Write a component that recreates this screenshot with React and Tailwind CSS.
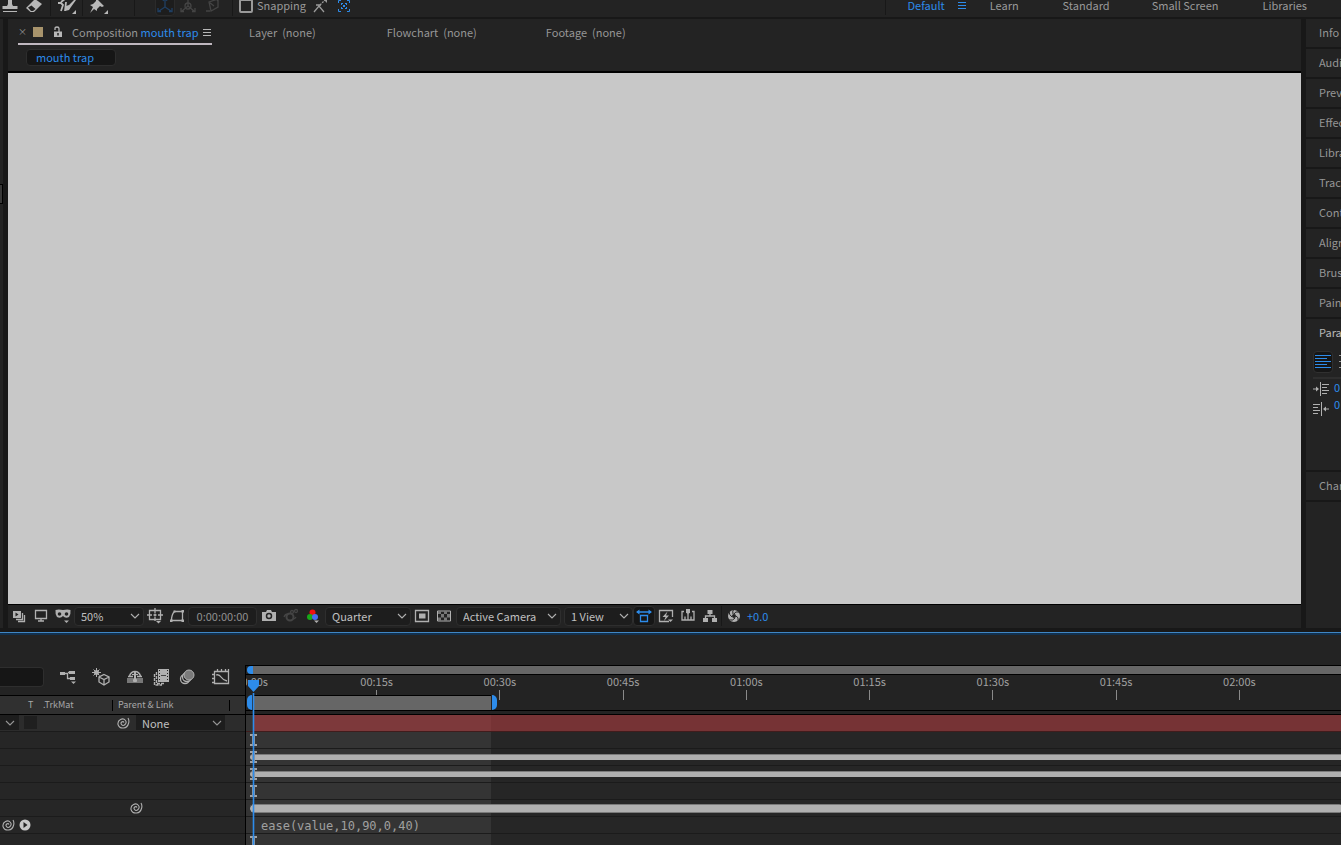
import React from "react";

const Svg = ({ w = 16, h = 16, className = "", children }) => (
  <svg
    width={w}
    height={h}
    viewBox={`0 0 ${w} ${h}`}
    fill="none"
    stroke="currentColor"
    strokeWidth="1.3"
    className={`shrink-0 ${className}`}
    aria-hidden="true"
  >
    {children}
  </svg>
);

const IconStamp = () => (
  <Svg w={16} h={18}>
    <path d="M6 2h4v5l1 2h4.500v3H.5V9H5l1-2z" fill="currentColor" stroke="none" />
    <path d="M1 14.500h14" strokeWidth="1" />
  </Svg>
);

const IconEraser = () => (
  <Svg w={18} h={18}>
    <path d="M10 2l7 5-8 8H5.500l-4.500-4z" fill="currentColor" stroke="none" />
    <path d="M3 10.500l3.500-2 4 3.500-2.500 2H6z" fill="#232323" stroke="none" />
  </Svg>
);

const IconRoto = () => (
  <Svg w={20} h={18}>
    <path d="M1 6h3l2 2-2 6M4 5l4-3M9 5l-1 9" strokeWidth="1.800" />
    <path d="M18 2l-6 6-3 1-1 5 4-1 2-3 5-7z" fill="currentColor" stroke="none" />
    <path d="M19 13v4h-4z" fill="currentColor" stroke="none" />
  </Svg>
);

const IconPin = () => (
  <Svg w={20} h={18}>
    <path
      d="M7 1l8 8-2 1-2-1-3 3 0 2-3-2-4 4 3-6-3-2 3-1 3-3z"
      fill="currentColor"
      stroke="none"
    />
    <path d="M19 13v4h-4z" fill="currentColor" stroke="none" />
  </Svg>
);

const IconAxis = () => (
  <Svg w={16} h={18}>
    <path d="M8 2v8L2 14M8 10l6 4M1 11v3.500h3M15 11v3.500h-3M6 4l2-3 2 3" />
  </Svg>
);

const IconWorldAxis = () => (
  <Svg w={16} h={18}>
    <path d="M8 2v7L2 14M8 9l6 5M1 11v3.500h3M15 11v3.500h-3" />
    <circle cx="8" cy="9" r="3" />
  </Svg>
);

const IconViewAxis = () => (
  <Svg w={16} h={18}>
    <path d="M4 5l9-3v8l-7 4zM4 5l5 4M1 14h4M12 4l2-2" />
  </Svg>
);

const IconSnapEdge = () => (
  <Svg w={16} h={18}>
    <path d="M2 15l5-6 5 6M4 8h5" />
    <path d="M8 8l5-5" strokeDasharray="2 1" />
    <path d="M10 1h5v5z" fill="currentColor" stroke="none" />
  </Svg>
);

const IconSnapBox = () => (
  <Svg w={14} h={18}>
    <path d="M1.500 6V3.500H4M10 3.500h2.500V6M1.500 12v2.500H4M12.500 12v2.500H10" strokeWidth="1" />
    <path d="M4 6.500h2M8 6.500h2M4 11.500h2M8 11.500h2M4.500 7v1M9.500 7v1M4.500 10v1M9.500 10v1" strokeWidth="1" />
    <path d="M6 9h2" strokeWidth="2" />
  </Svg>
);

const IconMenu = () => (
  <Svg w={10} h={9}>
    <path d="M1 1.500h8M1 4.500h8M1 7.500h8" strokeWidth="1" />
  </Svg>
);

const IconLock = () => (
  <Svg w={10} h={12}>
    <path d="M1 5.500h8V11H1z" fill="currentColor" stroke="none" />
    <path d="M2 4V2.500Q2 1 4 1t2 1.500V6" />
    <path d="M5 7v2.500" stroke="#232323" strokeWidth="1.500" />
  </Svg>
);

const IconChevron = ({ className }) => (
  <Svg w={10} h={6} className={className}>
    <path d="M1 1l4 4 4-4" strokeWidth="1.100" />
  </Svg>
);

const IconPreview = () => (
  <Svg>
    <path d="M2 3h8v7H2z" fill="currentColor" stroke="none" />
    <path d="M4.500 4.500v4l3-2z" fill="#232323" stroke="none" />
    <path d="M5 11.500h6.500V5M7 13.500h6.500V7" />
  </Svg>
);

const IconMonitor = () => (
  <Svg>
    <path d="M2.500 2.500h11v8h-11zM8 10.500v2M5 13h6" />
  </Svg>
);

const IconMask = () => (
  <Svg>
    <path
      d="M.5 2q3-1 7.500 0 4.500-1 7.500 0 .5 4-1.500 7-3.500 2-6-1-2.500 3-6 1Q0 6 .5 2z"
      fill="currentColor"
      stroke="none"
    />
    <circle cx="4.500" cy="6" r="1.800" fill="#232323" stroke="none" />
    <circle cx="11.500" cy="6" r="1.800" fill="#232323" stroke="none" />
    <path d="M9 12.500h5L11.500 15z" fill="currentColor" stroke="none" />
  </Svg>
);

const IconGrid = () => (
  <Svg>
    <path d="M2.500 2.500h11v9h-11zM8 0v5M8 9v4M0 7h5M11 7h5M6.500 7h3M8 5.500v3" />
    <path d="M9 13h5l-2.500 2.500z" fill="currentColor" stroke="none" />
  </Svg>
);

const IconMaskShape = () => (
  <Svg>
    <path d="M5.500 3.500h8v9h-11q0-6 3-9z" />
    <path
      d="M4.500 2.500h2v2h-2zM12.500 2h2.500v2.500h-2.500zM1 11.500h2.500V14H1zM12.500 11.500H15V14h-2.500z"
      fill="currentColor"
      stroke="none"
    />
  </Svg>
);

const IconCamera = () => (
  <Svg>
    <path d="M1 4h4l1-2h4l1 2h4v9H1z" fill="currentColor" stroke="none" />
    <circle cx="8" cy="8" r="2.500" stroke="#232323" strokeWidth="1.500" />
  </Svg>
);

const IconShowSnapshot = () => (
  <Svg>
    <circle cx="7" cy="9" r="3.500" strokeWidth="2" />
    <path d="M1 9q1-3 4-3M10 11q2 0 3-2" />
    <circle cx="9" cy="4" r="1.500" />
    <circle cx="13" cy="3" r="1.500" />
  </Svg>
);

const IconChannels = () => (
  <Svg>
    <circle cx="7.500" cy="4.500" r="3" fill="#f01010" stroke="none" />
    <circle cx="5" cy="9" r="3" fill="#18a818" stroke="none" />
    <circle cx="10" cy="9" r="3" fill="#4a6cf0" stroke="none" />
    <path d="M9 12.500h5L11.500 15z" fill="currentColor" stroke="none" />
  </Svg>
);

const IconRegion = () => (
  <Svg>
    <path d="M1.500 2.500h13v11h-13z" />
    <path d="M5 5.500h6.500v5H5z" fill="currentColor" stroke="none" />
  </Svg>
);

const IconChecker = () => (
  <Svg>
    <path d="M1.500 3h13v10h-13z" strokeWidth="1" />
    <path
      d="M2 3h3v3H2zM8 3h3v3H8zM5 6h3v3.500H5zM11 6h3v3.500h-3zM2 9.500h3V13H2zM8 9.500h3V13H8z"
      fill="#777777"
      stroke="none"
    />
  </Svg>
);

const IconPixelAspect = () => (
  <Svg>
    <path d="M1 4h14M4.500 7.500h7v6h-7z" />
    <path d="M3.500 1.500v5L0 4zM12.500 1.500v5L16 4z" fill="currentColor" stroke="none" />
  </Svg>
);

const IconFastPreview = () => (
  <Svg>
    <path d="M11 13.500H1.500v-11h13V9" />
    <path d="M9.500 3.500L4.500 9h3l-1.500 4 5-5.500H8z" fill="currentColor" stroke="none" />
    <path d="M10 11.500h5L12.500 14z" fill="currentColor" stroke="none" />
  </Svg>
);

const IconTimelineView = () => (
  <Svg>
    <path d="M4 3.500H2v8.500h12V3.500h-2M5 12V8.500M8 12V6M11 12V8.500" />
    <path d="M6 1h4v3.500L8 6.500 6 4.500z" fill="currentColor" stroke="none" />
  </Svg>
);

const IconFlow = () => (
  <Svg>
    <path
      d="M5.500 2h5v4h-5zM1 10h5v4H1zM10 10h5v4h-5z"
      fill="currentColor"
      stroke="none"
    />
    <path d="M8 6v2M3.500 10V8h9v2" />
  </Svg>
);

const IconShutter = () => (
  <Svg>
    <circle cx="8" cy="8" r="6" fill="currentColor" stroke="none" />
    <circle cx="8" cy="8" r="2" fill="#232323" stroke="none" />
    <path
      d="M8 6Q9 3 13 4M10 8q3 1 2 5M9 10q-2 3-6 2M6 9Q3 7 3 3M7 6Q6 3 8 1"
      stroke="#232323"
      strokeWidth="1"
    />
  </Svg>
);

const IconMiniFlow = () => (
  <Svg w={18} h={18}>
    <path d="M1 4h5v3H1zM10 3h6v3h-6zM11 9h5v3h-5z" fill="currentColor" stroke="none" />
    <path d="M5 5.500h4M8.500 5v5.500H11M9 4.500h2" />
    <path d="M12 13.500h5L14.500 16z" fill="currentColor" stroke="none" />
  </Svg>
);

const IconDraft3d = () => (
  <Svg w={18} h={18}>
    <path d="M12 6.500l5 2.500v5l-5 3-5-3V9zM7 9l5 2.500L17 9M12 11.500V17" />
    <path d="M4.500 0v9M0 4.500h9M1.500 1.500l6 6M7.500 1.500l-6 6" strokeWidth="1" />
    <circle cx="4.500" cy="4.500" r="2.500" fill="currentColor" stroke="none" />
  </Svg>
);

const IconShy = () => (
  <Svg w={18} h={18}>
    <path d="M1 10h16v5H1z" fill="#777777" stroke="none" />
    <path d="M3.500 8q1.500-4.500 5.500-4.500T14.500 8" strokeWidth="1.500" />
    <path d="M2 8.500h5M11 8.500h5" strokeWidth="1.600" />
    <path d="M9 3v11" strokeWidth="2" />
    <path d="M6 6.500h6" strokeWidth="1.200" />
    <path d="M7 12.500h4" strokeWidth="2.500" />
  </Svg>
);

const IconFrameBlend = () => (
  <Svg w={18} h={18}>
    <path d="M6 1h11v13H6z" fill="currentColor" stroke="none" />
    <path d="M7.500 2v11M15.500 2v11" stroke="#232323" strokeWidth="1" strokeDasharray="1 2" />
    <path d="M9 7.500h5" stroke="#444444" strokeWidth="1" />
    <path d="M4.500 4v11.500H13M2.500 6v11H10" strokeWidth="1.400" strokeDasharray="3 1" />
  </Svg>
);

const IconMotionBlur = () => (
  <Svg w={18} h={18}>
    <circle cx="7" cy="11" r="4.500" />
    <circle cx="9" cy="9" r="4.500" fill="#232323" />
    <circle cx="11" cy="7" r="5" fill="#7a7a7a" strokeWidth="1" />
  </Svg>
);

const IconGraph = () => (
  <Svg w={18} h={18}>
    <path d="M2.500 3.500h14v12h-14zM5.500 1v2M9.500 1v2M13.500 1v2M16.500 1v2M0 6.500h2M0 10.500h2M0 14.500h2" />
    <path d="M4 7q3-1 5 2t6 4" />
  </Svg>
);

const IconSpiral = () => (
  <Svg w={14} h={14} className="text-[#b0b0b0]">
    <path
      d="M8 6.500Q7 5 5.700 6T5.500 8.500Q7 10.500 9 8.500T9.500 4.500Q7.500 2 4.500 3.500T2 8.500Q3.500 12.500 7.500 12T12.500 7.500Q13.500 4.500 12 2"
      strokeWidth="1.100"
    />
  </Svg>
);

const IconPlay = () => (
  <Svg w={12} h={12}>
    <circle cx="6" cy="6" r="5.500" fill="#c8c8c8" stroke="none" />
    <path d="M4.500 3v6l4-3z" fill="#232323" stroke="none" />
  </Svg>
);

const IconAlignLeft = () => (
  <Svg w={16} h={16}>
    <path d="M0 2.500h16M0 5.500h12M0 8.500h16M0 11.500h12M0 14.500h16" strokeWidth="1" />
  </Svg>
);

const IconAlignCenter = () => (
  <Svg w={16} h={16}>
    <path d="M0 2.500h16M2 5.500h12M0 8.500h16M2 11.500h12M0 14.500h16" strokeWidth="1" />
  </Svg>
);

const IconIndentLeft = () => (
  <Svg w={16} h={16}>
    <path d="M7.500 1v14M9 3.500h7M9 6.500h5M9 9.500h7M9 12.500h5M0 8h4" strokeWidth="1" />
    <path d="M3 5.500v5L6 8z" fill="currentColor" stroke="none" />
  </Svg>
);

const IconIndentRight = () => (
  <Svg w={16} h={16}>
    <path d="M8.500 1v14M0 3.500h7M0 6.500h5M0 9.500h7M0 12.500h5M12 8h4" strokeWidth="1" />
    <path d="M13 5.500v5L10 8z" fill="currentColor" stroke="none" />
  </Svg>
);

const IconBtn = ({ label, className = "w-[22px]", children }) => (
  <button
    type="button"
    aria-label={label}
    className={`flex h-5 shrink-0 items-center justify-center ${className}`}
  >
    {children}
  </button>
);

const Divider = ({ className = "" }) => (
  <span className={`h-5 w-px shrink-0 bg-[#181818] ${className}`} />
);

const Dropdown = ({ label, value, className }) => (
  <label className={`relative flex shrink-0 items-center ${className}`}>
    <select
      aria-label={label}
      defaultValue={value}
      className="h-full w-full appearance-none bg-transparent pb-[2px] pl-[6px] text-[#c0c0c0] outline-none"
    >
      <option>{value}</option>
    </select>
    <IconChevron className="pointer-events-none absolute right-[3px]" />
  </label>
);

const workspaces = [
  { name: "Learn", gap: "ml-[23px]" },
  { name: "Standard", gap: "ml-[44px]" },
  { name: "Small Screen", gap: "ml-[42px]" },
  { name: "Libraries", gap: "ml-[44px]" },
];

const TopBar = () => (
  <header className="flex h-[19px] shrink-0 items-center border-b-2 border-[#181818] pb-[5px] text-[#9a9a9a]">
    <IconBtn label="Clone Stamp" className="w-[20px] text-[#b8b8b8]"><IconStamp /></IconBtn>
    <IconBtn label="Eraser" className="w-[28px] text-[#b8b8b8]"><IconEraser /></IconBtn>
    <Divider className="ml-[2px]" />
    <IconBtn label="Roto Brush" className="w-[31px] text-[#b8b8b8]"><IconRoto /></IconBtn>
    <Divider />
    <IconBtn label="Puppet Pin" className="w-[31px] text-[#b8b8b8]"><IconPin /></IconBtn>
    <Divider className="ml-[20px]" />
    <IconBtn label="Local Axis" className="ml-[20px] w-[20px] rounded-sm border border-[#2b2b2b] bg-[#1d1d1d] text-[#1f3f63]"><IconAxis /></IconBtn>
    <IconBtn label="World Axis" className="ml-[2px] w-[22px] text-[#444444]"><IconWorldAxis /></IconBtn>
    <IconBtn label="View Axis" className="ml-[2px] w-[23px] text-[#444444]"><IconViewAxis /></IconBtn>
    <Divider className="ml-[8px]" />
    <label className="ml-[6px] flex shrink-0 items-center gap-[4px]">
      <input type="checkbox" className="size-[14px] appearance-none rounded-xs border-2 border-[#9a9a9a]" />
      <span className="pb-[2px]">Snapping</span>
    </label>
    <IconBtn label="Snap Edges" className="ml-[3px] w-[22px]"><IconSnapEdge /></IconBtn>
    <IconBtn label="Snap Bounds" className="ml-[2px] w-[22px] text-[#2d8ceb]"><IconSnapBox /></IconBtn>
    <nav className="ml-auto flex items-center whitespace-nowrap pb-[2px]">
      <Divider />
      <a href="#default" className="ml-[22px] text-[#2d8ceb]">Default</a>
      <span className="ml-[12px] text-[#2d8ceb]"><IconMenu /></span>
      {workspaces.map((w) => (
        <a key={w.name} href="#workspace" className={w.gap}>
          {w.name}
        </a>
      ))}
    </nav>
    <span className="w-[34px] shrink-0" />
  </header>
);

const ViewerTabs = () => (
  <div className="shrink-0 border-b-2 border-black">
    <div className="flex h-[26px] items-stretch pl-[10px]">
      <div className="flex w-[194px] shrink-0 items-center whitespace-nowrap border-b-2 border-[#c0b8c0] pt-[2px]">
        <button type="button" aria-label="Close" className="w-[15px] shrink-0 text-left text-[9px]">×</button>
        <span className="size-[10px] shrink-0 bg-[#a8946c]" />
        <span className="ml-[10px] text-[#b8b8b8]"><IconLock /></span>
        <span className="ml-[9px]">
          Composition <a href="#comp" className="text-[#2d8ceb]">mouth trap</a>
        </span>
        <button type="button" aria-label="Panel menu" className="ml-auto text-[#b8b8b8]"><IconMenu /></button>
      </div>
      <div className="flex items-center whitespace-pre pb-[1px]">
        <button type="button" className="ml-[37px]">Layer  (none)</button>
        <button type="button" className="ml-[71px]">Flowchart  (none)</button>
        <button type="button" className="ml-[69px]">Footage  (none)</button>
      </div>
    </div>
    <div className="flex h-[26px] items-center pb-[1px] pl-[18px]">
      <button type="button" className="h-[17px] w-[90px] rounded-sm border border-[#2d2d2d] bg-[#161616] pb-[2px] pl-[9px] text-left leading-[14px] text-[#2d8ceb]">
        mouth trap
      </button>
    </div>
  </div>
);

const box = "h-[19px] rounded-sm border border-[#2e2e2e] bg-[#1d1d1d]";

const ViewerFooter = () => (
  <div className="flex h-[24px] shrink-0 items-center border-t border-black pb-[1px] text-[#b0b0b0]">
    <IconBtn label="Always Preview"><IconPreview /></IconBtn>
    <IconBtn label="Primary Viewer"><IconMonitor /></IconBtn>
    <IconBtn label="VR"><IconMask /></IconBtn>
    <Dropdown label="Magnification" value="50%" className={`w-[70px] ${box}`} />
    <IconBtn label="Grid and guides"><IconGrid /></IconBtn>
    <IconBtn label="Mask visibility"><IconMaskShape /></IconBtn>
    <button type="button" className={`w-[69px] shrink-0 pb-[2px] text-[#909090] ${box}`}>0:00:00:00</button>
    <IconBtn label="Snapshot" className="ml-[1px] w-[22px]"><IconCamera /></IconBtn>
    <IconBtn label="Show snapshot" className="w-[22px] text-[#444444]"><IconShowSnapshot /></IconBtn>
    <IconBtn label="Channels"><IconChannels /></IconBtn>
    <Dropdown label="Resolution" value="Quarter" className={`ml-[1px] w-[86px] ${box}`} />
    <IconBtn label="Region of interest"><IconRegion /></IconBtn>
    <IconBtn label="Transparency grid"><IconChecker /></IconBtn>
    <Dropdown label="3D view" value="Active Camera" className={`ml-[1px] w-[105px] ${box}`} />
    <Dropdown label="View layout" value="1 View" className={`ml-[3px] w-[69px] ${box}`} />
    <IconBtn label="Pixel aspect" className="w-[22px] rounded-sm border border-[#2e2e2e] bg-[#161616] text-[#2d8ceb]"><IconPixelAspect /></IconBtn>
    <IconBtn label="Fast previews"><IconFastPreview /></IconBtn>
    <IconBtn label="Timeline"><IconTimelineView /></IconBtn>
    <IconBtn label="Flowchart"><IconFlow /></IconBtn>
    <Divider />
    <IconBtn label="Reset exposure" className="w-[23px]"><IconShutter /></IconBtn>
    <a href="#exposure" className="ml-[2px] text-[#2d8ceb]">+0.0</a>
  </div>
);

const panels = [
  "Info",
  "Audio",
  "Preview",
  "Effects & Presets",
  "Libraries",
  "Tracker",
  "Content-Aware Fill",
  "Align",
  "Brushes",
  "Paint",
];

const SidePanels = () => (
  <aside className="flex w-[35px] shrink-0 flex-col overflow-hidden whitespace-nowrap">
    {panels.map((name) => (
      <button key={name} type="button" className="h-[30px] shrink-0 border-b-2 border-[#181818] pb-[2px] pl-[13px] text-left">
        {name}
      </button>
    ))}
    <div className="h-[153px] shrink-0 border-b-2 border-[#181818] pl-[7px]">
      <h2 className="flex h-7 items-center pb-[2px] pl-[6px] text-[#b8b8b8]">Paragraph</h2>
      <div className="mt-[4px] flex h-[22px] items-center gap-[4px]">
        <button type="button" aria-label="Left align text" className="flex h-[22px] w-[20px] shrink-0 items-center justify-center rounded-sm border border-[#303030] bg-[#161616] pb-[2px] text-[#2d8ceb]">
          <IconAlignLeft />
        </button>
        <button type="button" aria-label="Center text" className="flex h-[22px] w-[20px] shrink-0 items-center justify-center pb-[2px]">
          <IconAlignCenter />
        </button>
      </div>
      <div className="mt-[4px] flex h-[21px] items-center gap-[5px] border-t-2 border-[#2e2e2e] text-[#b0b0b0]">
        <IconIndentLeft />
        <span className="pb-[3px] text-[#2d8ceb]">0 px</span>
      </div>
      <div className="flex h-[20px] items-center gap-[5px] pt-[1px] text-[#b0b0b0]">
        <IconIndentRight />
        <span className="pb-[9px] text-[#2d8ceb]">0 px</span>
      </div>
    </div>
    <button type="button" className="h-[30px] shrink-0 border-b-2 border-[#181818] pb-[2px] pl-[13px] text-left">
      Character
    </button>
  </aside>
);

const LayerRow = ({ children }) => (
  <div className="flex h-[17px] shrink-0 items-center border-b border-[#1b1b1b] bg-[#262626] pb-[1px]">
    {children}
  </div>
);

const LayerColumns = () => (
  <div className="flex w-[246px] shrink-0 flex-col pt-[30px]">
    <div className="flex h-[31px] shrink-0 items-center border-b border-r border-black pb-[6px] text-[#b0b0b0]">
      <input aria-label="Search layers" className="h-[20px] w-[44px] rounded-r-sm border border-l-0 border-[#2e2e2e] bg-[#161616]" />
      <IconBtn label="Mini-Flowchart" className="ml-[12px] w-[24px]"><IconMiniFlow /></IconBtn>
      <IconBtn label="Draft 3D" className="ml-[9px] w-[24px]"><IconDraft3d /></IconBtn>
      <IconBtn label="Shy layers" className="ml-[9px] w-[26px]"><IconShy /></IconBtn>
      <IconBtn label="Frame blending" className="w-[26px]"><IconFrameBlend /></IconBtn>
      <IconBtn label="Motion blur" className="w-[26px]"><IconMotionBlur /></IconBtn>
      <IconBtn label="Graph editor" className="ml-[8px] w-[26px]"><IconGraph /></IconBtn>
    </div>
    <div className="flex flex-1 flex-col border-r border-black">
      <div className="flex h-[19px] shrink-0 items-center whitespace-nowrap border-b border-black bg-[#303030] text-[9px] text-[#a8a8a8]">
        <span className="ml-[28px] w-[15px]">T</span>
        <span className="w-[69px]">.TrkMat</span>
        <span className="h-[11px] w-px bg-black" />
        <span className="w-[116px] pl-[5px]">Parent & Link</span>
        <span className="h-[11px] w-px bg-black" />
      </div>
      <div className="flex h-[17px] shrink-0 items-center border-b border-[#1b1b1b] bg-[#2c2c2c] pb-[1px]">
        <button type="button" aria-label="Blending mode" className="flex h-[15px] w-[19px] items-center justify-end bg-[#1d1d1d] pr-[4px]">
          <IconChevron />
        </button>
        <input type="checkbox" aria-label="Preserve transparency" className="ml-[5px] h-[13px] w-[13px] appearance-none bg-[#1f1f1f]" />
        <span className="ml-[79px]"><IconSpiral /></span>
        <Dropdown label="Parent" value="None" className="ml-[6px] h-[15px] w-[89px] bg-[#1d1d1d]" />
      </div>
      <LayerRow />
      <LayerRow />
      <LayerRow />
      <LayerRow />
      <LayerRow>
        <span className="ml-[129px]"><IconSpiral /></span>
      </LayerRow>
      <LayerRow>
        <span className="ml-[1px]"><IconSpiral /></span>
        <button type="button" aria-label="Expression language menu" className="ml-[4px]"><IconPlay /></button>
      </LayerRow>
      <LayerRow />
    </div>
  </div>
);

const times = ["00:15s", "00:30s", "00:45s", "01:00s", "01:15s", "01:30s", "01:45s", "02:00s"];

const IBeam = () => (
  <Svg w={7} h={12} className="relative ml-[4px] text-[#c8c8c8]">
    <path d="M0 1h3M4 1h3M0 11h3M4 11h3" />
    <path d="M3.500 1v10" strokeWidth="3" stroke="#9a9a9a" />
  </Svg>
);

// One property row: keyframe marker at the left, optional key strip behind it.
const TrackRow = ({ strip, beam, children }) => (
  <div className="relative flex h-[17px] shrink-0 items-center border-b border-[#1b1b1b]">
    {strip === "thin" && (
      <span className="absolute inset-x-0 top-[5px] ml-[4px] h-[6px] rounded-l-sm border-t border-[#7c7c7c] bg-[#b0b0b0]" />
    )}
    {strip === "thick" && (
      <span className="absolute inset-x-0 top-[4px] ml-[4px] h-[9px] rounded-l-full border-y border-dotted border-[#444444] bg-[#b0b0b0]" />
    )}
    {beam && <IBeam />}
    {children}
  </div>
);

const TrackArea = () => (
  <div className="relative flex min-w-0 flex-1 flex-col overflow-hidden">
    {/* Time navigator */}
    <div className="mt-[30px] flex h-[10px] shrink-0 border-y border-black pl-[1px]">
      <span className="w-[6px] rounded-l-full bg-[#2d8ceb]" />
      <span className="flex-1 bg-[#666666]" />
    </div>
    {/* Ruler */}
    <div className="flex h-[20px] shrink-0 leading-[12px] text-[#a0a0a0]">
      <div className="flex w-[69px] shrink-0">
        <span className="flex w-[22px] justify-end overflow-hidden whitespace-nowrap">0:00s</span>
      </div>
      <div className="grid flex-1 grid-cols-8 pr-[40px]">
        {times.map((t) => (
          <div key={t} className="flex flex-col items-center gap-[3px]">
            {t}
            <span className="h-[10px] w-px shrink-0 bg-[#8a8a8a]" />
          </div>
        ))}
      </div>
    </div>
    {/* Work area */}
    <div className="flex h-[16px] shrink-0 border-b border-black pl-[1px]">
      <span className="w-[5px] rounded-l-full bg-[#2d8ceb]" />
      <span className="ml-[1px] w-[238px] border-t border-black bg-[#666666]" />
      <span className="ml-[1px] w-[5px] rounded-r-md bg-[#2d8ceb]" />
    </div>
    <div className="h-[4px] shrink-0 border-b border-black" />
    {/* Tracks */}
    <div className="relative flex flex-1 flex-col bg-[#262626]">
      <span className="absolute inset-y-0 left-0 w-[245px] bg-[#343434]" />
      <div className="relative flex h-[17px] shrink-0 border-b border-[#401c1c] pl-[7px]">
        <span className="w-[238px] bg-[#7d393b]" />
        <span className="flex-1 bg-[#763335]" />
      </div>
      <TrackRow beam />
      <TrackRow strip="thin" beam />
      <TrackRow strip="thin" beam />
      <TrackRow beam />
      <TrackRow strip="thick" />
      <TrackRow>
        <code className="ml-[15px] pt-[2px] font-['DejaVu_Sans_Mono',monospace] text-[12px] leading-[14px] text-[#a0a0a0]">
          ease(value,10,90,0,40)
        </code>
      </TrackRow>
      <TrackRow beam />
    </div>
    {/* Current time indicator */}
    <div className="pointer-events-none absolute bottom-0 left-[1px] top-[44px] flex w-[13px] flex-col items-center text-[#2d8ceb]">
      <Svg w={13} h={14}>
        <path d="M1 1h11v6l-5.500 6L1 7z" fill="currentColor" stroke="none" />
      </Svg>
      <span className="w-[3px] flex-1 border-x border-[#2d8ceb]/30 bg-[#2d8ceb] bg-clip-padding" />
    </div>
  </div>
);

const App = () => {
  return (
    <div className="flex h-screen flex-col overflow-hidden bg-[#232323] font-['Noto_Sans_CJK_SC','Noto_Sans',sans-serif] text-[11px] leading-4 text-[#969696]">
      <TopBar />
      <main className="flex min-h-0 flex-1 border-b-4 border-[#181818]">
        <div className="flex w-[8px] shrink-0 border-r-[5px] border-[#181818]">
          <span className="mt-[165px] h-[20px] w-[3px] border border-l-0 border-black bg-[#383838]" />
        </div>
        <section className="flex min-w-0 flex-1 flex-col">
          <ViewerTabs />
          <div className="min-h-0 flex-1 bg-[#c8c8c8]" />
          <ViewerFooter />
        </section>
        <div className="w-[5px] shrink-0 bg-[#181818]" />
        <SidePanels />
      </main>
      <section className="flex h-[213px] shrink-0 flex-col border-t border-[#3f86c4]">
        <div className="h-[2px] shrink-0 bg-[#12304d]" />
        <div className="flex min-h-0 flex-1 overflow-hidden">
          <LayerColumns />
          <TrackArea />
        </div>
      </section>
    </div>
  );
};

export default App;
